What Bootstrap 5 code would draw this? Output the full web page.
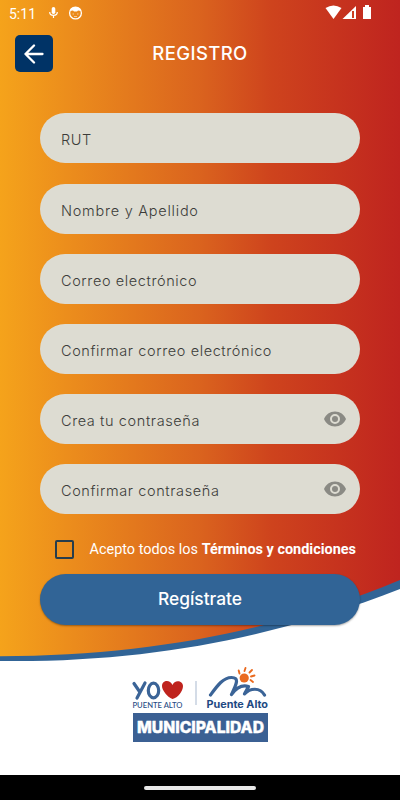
<!DOCTYPE html>
<html lang="es">
<head>
<meta charset="utf-8">
<meta name="viewport" content="width=device-width, initial-scale=1">
<title>Registro</title>
<link rel="stylesheet" href="https://cdn.jsdelivr.net/npm/bootstrap@5.3.0/dist/css/bootstrap.min.css">
<style>
  body { font-family: Inter, "Liberation Sans", sans-serif; }
  .screen { width: 400px; height: 800px; }
  .backdrop { z-index: 0; }
  .layer { z-index: 1; }
  .statusbar { height: 25px; padding: 0 28px 0 9px; font: 400 14px/22px Roboto, sans-serif; }
  .clock { width: 40px; padding-top: 2px; }
  .topbar { height: 37px; margin-top: 10px; padding-left: 15px; }
  .back { width: 38px; height: 37px; border-radius: 5px; background: #003366; }
  .page-title { font-size: 18.500px; font-weight: 500; width: 294px; letter-spacing: .4px; line-height: 34px; padding-bottom: 1px; }
  .fields { margin: 41.400px 40px 0; gap: 20.200px; }
  .field { height: 50px; background: #dddcd2; padding: 4px 13px 0 21px; }
  .field input { font-size: 14.500px; font-weight: 300; color: #333; letter-spacing: .6px; min-width: 0; line-height: 20px; }
  .field input.roomy { letter-spacing: .75px; }
  .field input::placeholder { color: #3c3c3a; opacity: 1; }
  .field svg { margin-top: -4px; }
  .terms { margin: 25.600px 0 0 55px; height: 19px; gap: 15.500px; font: 400 14.450px/19px Roboto, sans-serif; }
  .tick.form-check-input { width: 19px; height: 19px; border: 2px solid #263d4c; border-radius: 2px; background: transparent; margin: 0; flex: none; }
  .submit { margin: 15px 40px 0; height: 51px; background: #316496; color: #fff; font-size: 17.400px; font-weight: 500; box-shadow: 0 1px 2px rgba(0,0,0,.35); }
  .submit span { display: block; padding-bottom: 1px; }
  .logo { margin-top: 39px; height: 80px; }
  .navstrip { height: 25px; background: #000; }
  .handle { width: 112px; height: 4px; background: #e8e8e8; }
</style>
<script src="https://cdn.jsdelivr.net/npm/bootstrap@5.3.0/dist/js/bootstrap.bundle.min.js"></script>
</head>
<body class="m-0">
<main class="screen position-relative overflow-hidden bg-white">
  <svg class="backdrop position-absolute top-0 start-0" width="400" height="800" aria-hidden="true">
    <defs><linearGradient id="sunset"><stop offset="0" stop-color="#f5a31b"/><stop offset=".5" stop-color="#da631e"/><stop offset=".68" stop-color="#ce431d"/><stop offset="1" stop-color="#bf241f"/></linearGradient></defs>
    <path d="M0 0H400V589C280 636 150 663 0 661Z" fill="#316496"/>
    <path d="M0 0H400V580C280 630 150 656 0 656.300Z" fill="url(#sunset)"/>
  </svg>
  <div class="layer position-relative d-flex flex-column h-100">
    <div class="statusbar d-flex align-items-center text-white">
      <span class="clock">5:11</span>
      <svg width="9" height="14" viewBox="0 0 9 14"><rect x="2.700" y="1" width="3.600" height="7" rx="1.800" fill="#fff"/><path d="M.7 6Q.7 9.300 4.500 9.300T8.300 6M4.500 9V12" fill="none" stroke="#fff" stroke-width="1.200"/></svg>
      <svg class="ms-2" width="18" height="14" viewBox="0 0 18 14"><circle cx="9.500" cy="7" r="5.900" fill="none" stroke="#fff" stroke-width="1.300"/><path d="M4 5Q5 1 9.500 1T15 5L12 4.500L11 5.500H8L7 4.500Z" fill="#fff"/><path d="M6.500 8H8M11 8H12.500M8 10.500H11" stroke="#fff" stroke-width=".8" opacity=".7"/></svg>
      <svg class="ms-auto" width="47" height="15" viewBox="0 0 47 15"><path d="M.5 3Q8.500-2 16.500 3L8.500 14Z" fill="#fff"/><path d="M17.500 14L31 1V14Z" fill="#fff"/><path d="M27 6H29V13H27Z" fill="#cc3d20"/><path d="M38 2H40V0H44V2H46V14H38Z" fill="#fff"/></svg>
    </div>
    <header class="topbar d-flex align-items-center">
      <button class="back btn p-0 d-flex align-items-center justify-content-center" aria-label="Volver"><svg width="20" height="20" viewBox="0 0 20 20" fill="none" stroke="#fff" stroke-width="2.300" stroke-linecap="round" stroke-linejoin="round"><path d="M18.500 10H1.500M10 1.500L1.500 10L10 18.500"/></svg></button>
      <h1 class="page-title text-white text-center m-0">REGISTRO</h1>
    </header>
    <form class="d-flex flex-column">
      <div class="fields d-flex flex-column">
        <label class="field rounded-pill d-flex align-items-center"><input class="border-0 bg-transparent p-0 flex-grow-1" placeholder="RUT"></label>
        <label class="field rounded-pill d-flex align-items-center"><input class="roomy border-0 bg-transparent p-0 flex-grow-1" placeholder="Nombre y Apellido"></label>
        <label class="field rounded-pill d-flex align-items-center"><input class="border-0 bg-transparent p-0 flex-grow-1" placeholder="Correo electrónico"></label>
        <label class="field rounded-pill d-flex align-items-center"><input class="border-0 bg-transparent p-0 flex-grow-1" placeholder="Confirmar correo electrónico"></label>
        <label class="field rounded-pill d-flex align-items-center"><input type="password" class="border-0 bg-transparent p-0 flex-grow-1" placeholder="Crea tu contraseña"><svg width="24" height="24" viewBox="0 0 24 24" fill="#8a8a84"><path d="M12 4.500C7 4.500 2.730 7.610 1 12c1.730 4.390 6 7.500 11 7.500s9.270-3.110 11-7.500C21.270 7.610 17 4.500 12 4.500zM12 17a5 5 0 1 1 0-10 5 5 0 0 1 0 10zm0-8a3 3 0 1 0 0 6 3 3 0 0 0 0-6z"/></svg></label>
        <label class="field rounded-pill d-flex align-items-center"><input type="password" class="border-0 bg-transparent p-0 flex-grow-1" placeholder="Confirmar contraseña"><svg width="24" height="24" viewBox="0 0 24 24" fill="#8a8a84"><path d="M12 4.500C7 4.500 2.730 7.610 1 12c1.730 4.390 6 7.500 11 7.500s9.270-3.110 11-7.500C21.270 7.610 17 4.500 12 4.500zM12 17a5 5 0 1 1 0-10 5 5 0 0 1 0 10zm0-8a3 3 0 1 0 0 6 3 3 0 0 0 0-6z"/></svg></label>
      </div>
      <label class="terms d-flex align-items-center text-white text-nowrap"><input type="checkbox" class="form-check-input tick"><span>Acepto todos los <b>Términos y condiciones</b></span></label>
      <button type="button" class="submit btn rounded-pill border-0 p-0"><span>Regístrate</span></button>
    </form>
    <svg class="logo mx-auto d-block" width="140" height="80" viewBox="130 664 140 80" fill="none" stroke-linecap="round" stroke-linejoin="round">
      <path d="M134 683.500L139.500 691.500M145 683L137 698" stroke="#3b6497" stroke-width="3.200"/>
      <ellipse cx="153.500" cy="690.500" rx="5.200" ry="7.300" stroke="#3b6497" stroke-width="3.200"/>
      <path d="M172.500 699C167 697 162 690 162 686C162 680 170 679 172.500 685C174 679.500 183 680 183 686C183 691 178 698 172.500 699Z" fill="#bf231d"/>
      <path d="M196 681V705" stroke="#a9b9cf" stroke-width="1" stroke-linecap="butt"/>
      <text x="132.500" y="708" font-family="Lato" font-size="8" font-weight="500" textLength="50" lengthAdjust="spacingAndGlyphs" fill="#1f4a83">PUENTE ALTO</text>
      <path d="M210.500 695C217 686 223 677.500 231.500 677.500C240 677.500 236 685 231.500 694.500C237 687 242 684.500 248.500 686.500C247 690 245 692 244.500 694C250 688 260 687 264.500 695" stroke="#3b6497" stroke-width="3.200"/>
      <circle cx="244.200" cy="678" r="4.600" fill="#ea6a1f"/>
      <path d="M238.700 670.500L239.500 673.500M245.500 668L244.500 671M252 670L249.500 672.500M254.500 675.500L251 676.500M253 682L250.500 680" stroke="#ea6a1f" stroke-width="1.900"/>
      <text x="206.500" y="708" font-family="Inter" font-weight="700" font-size="10" textLength="61.500" lengthAdjust="spacingAndGlyphs" fill="#1f4a83">Puente Alto</text>
      <rect x="133" y="713" width="135" height="29" fill="#3b6093"/>
      <text x="137" y="733.300" font-family="Inter" font-weight="800" font-size="16" textLength="127" lengthAdjust="spacingAndGlyphs" fill="#fff" stroke="#fff" stroke-width=".4">MUNICIPALIDAD</text>
    </svg>
    <div class="navstrip mt-auto d-flex align-items-center justify-content-center"><div class="handle rounded-pill"></div></div>
  </div>
</main>
</body>
</html>
